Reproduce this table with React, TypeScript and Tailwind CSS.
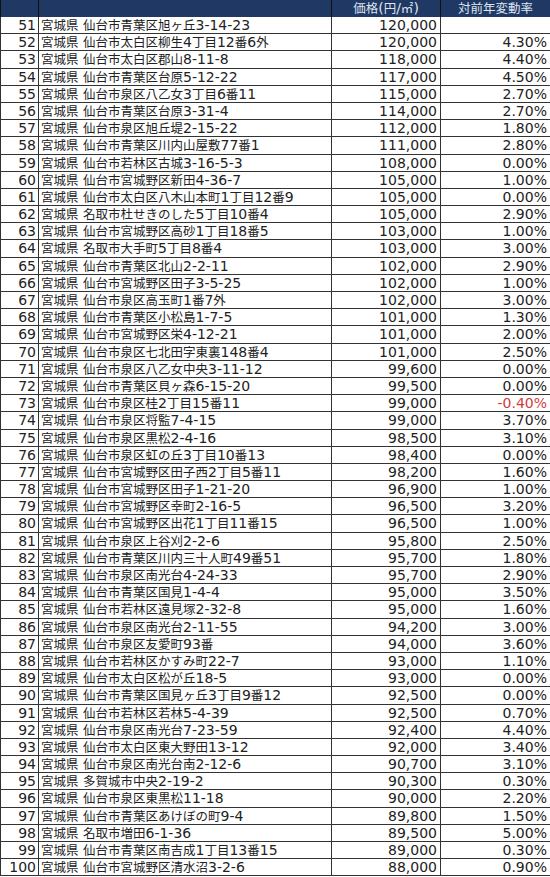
const rows: [number, string, string, string][] = [
  [51, '宮城県 仙台市青葉区旭ヶ丘3-14-23', '120,000', ''],
  [52, '宮城県 仙台市太白区柳生4丁目12番6外', '120,000', '4.30%'],
  [53, '宮城県 仙台市太白区郡山8-11-8', '118,000', '4.40%'],
  [54, '宮城県 仙台市青葉区台原5-12-22', '117,000', '4.50%'],
  [55, '宮城県 仙台市泉区八乙女3丁目6番11', '115,000', '2.70%'],
  [56, '宮城県 仙台市青葉区台原3-31-4', '114,000', '2.70%'],
  [57, '宮城県 仙台市泉区旭丘堤2-15-22', '112,000', '1.80%'],
  [58, '宮城県 仙台市青葉区川内山屋敷77番1', '111,000', '2.80%'],
  [59, '宮城県 仙台市若林区古城3-16-5-3', '108,000', '0.00%'],
  [60, '宮城県 仙台市宮城野区新田4-36-7', '105,000', '1.00%'],
  [61, '宮城県 仙台市太白区八木山本町1丁目12番9', '105,000', '0.00%'],
  [62, '宮城県 名取市杜せきのした5丁目10番4', '105,000', '2.90%'],
  [63, '宮城県 仙台市宮城野区高砂1丁目18番5', '103,000', '1.00%'],
  [64, '宮城県 名取市大手町5丁目8番4', '103,000', '3.00%'],
  [65, '宮城県 仙台市青葉区北山2-2-11', '102,000', '2.90%'],
  [66, '宮城県 仙台市宮城野区田子3-5-25', '102,000', '1.00%'],
  [67, '宮城県 仙台市泉区高玉町1番7外', '102,000', '3.00%'],
  [68, '宮城県 仙台市青葉区小松島1-7-5', '101,000', '1.30%'],
  [69, '宮城県 仙台市宮城野区栄4-12-21', '101,000', '2.00%'],
  [70, '宮城県 仙台市泉区七北田字東裏148番4', '101,000', '2.50%'],
  [71, '宮城県 仙台市泉区八乙女中央3-11-12', '99,600', '0.00%'],
  [72, '宮城県 仙台市青葉区貝ヶ森6-15-20', '99,500', '0.00%'],
  [73, '宮城県 仙台市泉区桂2丁目15番11', '99,000', '-0.40%'],
  [74, '宮城県 仙台市泉区将監7-4-15', '99,000', '3.70%'],
  [75, '宮城県 仙台市泉区黒松2-4-16', '98,500', '3.10%'],
  [76, '宮城県 仙台市泉区虹の丘3丁目10番13', '98,400', '0.00%'],
  [77, '宮城県 仙台市宮城野区田子西2丁目5番11', '98,200', '1.60%'],
  [78, '宮城県 仙台市宮城野区田子1-21-20', '96,900', '1.00%'],
  [79, '宮城県 仙台市宮城野区幸町2-16-5', '96,500', '3.20%'],
  [80, '宮城県 仙台市宮城野区出花1丁目11番15', '96,500', '1.00%'],
  [81, '宮城県 仙台市泉区上谷刈2-2-6', '95,800', '2.50%'],
  [82, '宮城県 仙台市青葉区川内三十人町49番51', '95,700', '1.80%'],
  [83, '宮城県 仙台市泉区南光台4-24-33', '95,700', '2.90%'],
  [84, '宮城県 仙台市青葉区国見1-4-4', '95,000', '3.50%'],
  [85, '宮城県 仙台市若林区遠見塚2-32-8', '95,000', '1.60%'],
  [86, '宮城県 仙台市泉区南光台2-11-55', '94,200', '3.00%'],
  [87, '宮城県 仙台市泉区友愛町93番', '94,000', '3.60%'],
  [88, '宮城県 仙台市若林区かすみ町22-7', '93,000', '1.10%'],
  [89, '宮城県 仙台市太白区松が丘18-5', '93,000', '0.00%'],
  [90, '宮城県 仙台市青葉区国見ヶ丘3丁目9番12', '92,500', '0.00%'],
  [91, '宮城県 仙台市若林区若林5-4-39', '92,500', '0.70%'],
  [92, '宮城県 仙台市泉区南光台7-23-59', '92,400', '4.40%'],
  [93, '宮城県 仙台市太白区東大野田13-12', '92,000', '3.40%'],
  [94, '宮城県 仙台市泉区南光台南2-12-6', '90,700', '3.10%'],
  [95, '宮城県 多賀城市中央2-19-2', '90,300', '0.30%'],
  [96, '宮城県 仙台市泉区東黒松11-18', '90,000', '2.20%'],
  [97, '宮城県 仙台市青葉区あけぼの町9-4', '89,800', '1.50%'],
  [98, '宮城県 名取市増田6-1-36', '89,500', '5.00%'],
  [99, '宮城県 仙台市青葉区南吉成1丁目13番15', '89,000', '0.30%'],
  [100, '宮城県 仙台市宮城野区清水沼3-2-6', '88,000', '0.90%'],
];

const cols = 'grid grid-cols-[39px_293px_109px_109px]';

// Japanese runs are set a bit smaller than the digits, like the sheet's font
function Mixed({ text }: { text: string }) {
  return (
    <span className="whitespace-pre">
      {text.split(/([^\x00-\x7f]+)/).map((part, i) =>
        /[^\x00-\x7f]/.test(part) ? (
          <span key={i} className="text-[12.5px]">
            {part}
          </span>
        ) : (
          part
        ),
      )}
    </span>
  );
}

export default function App() {
  return (
    <div className="w-[550px] bg-white text-[14px] leading-[17px] text-[#222] [font-family:'DejaVu_Sans','Noto_Sans_CJK_JP',sans-serif]">
      <div className={`${cols} h-[17px] bg-[#1f3864] text-[#dfe4ee]`}>
        <div className="border-l border-r border-[#111]" />
        <div className="border-r border-[#111]" />
        <div className="flex items-center justify-center border-r border-[#111]">
          <Mixed text="価格(円/㎡)" />
        </div>
        <div className="flex items-center justify-center">
          <Mixed text="対前年変動率" />
        </div>
      </div>
      {rows.map(([no, addr, price, rate]) => (
        <div key={no} className={`${cols} h-[17.2px] border-b border-[#333]`}>
          <div className="flex items-center justify-end overflow-hidden border-l border-r border-[#333] pr-[2px]">{no}</div>
          <div className="flex items-center overflow-hidden border-r border-[#333] pl-[2px]">
            <Mixed text={addr} />
          </div>
          <div className="flex items-center justify-end border-r border-[#333] pr-[3px]">{price}</div>
          <div className={`flex items-center justify-end pr-[3px] ${rate.startsWith('-') ? 'text-[#d04040]' : ''}`}>
            {rate}
          </div>
        </div>
      ))}
    </div>
  );
}
